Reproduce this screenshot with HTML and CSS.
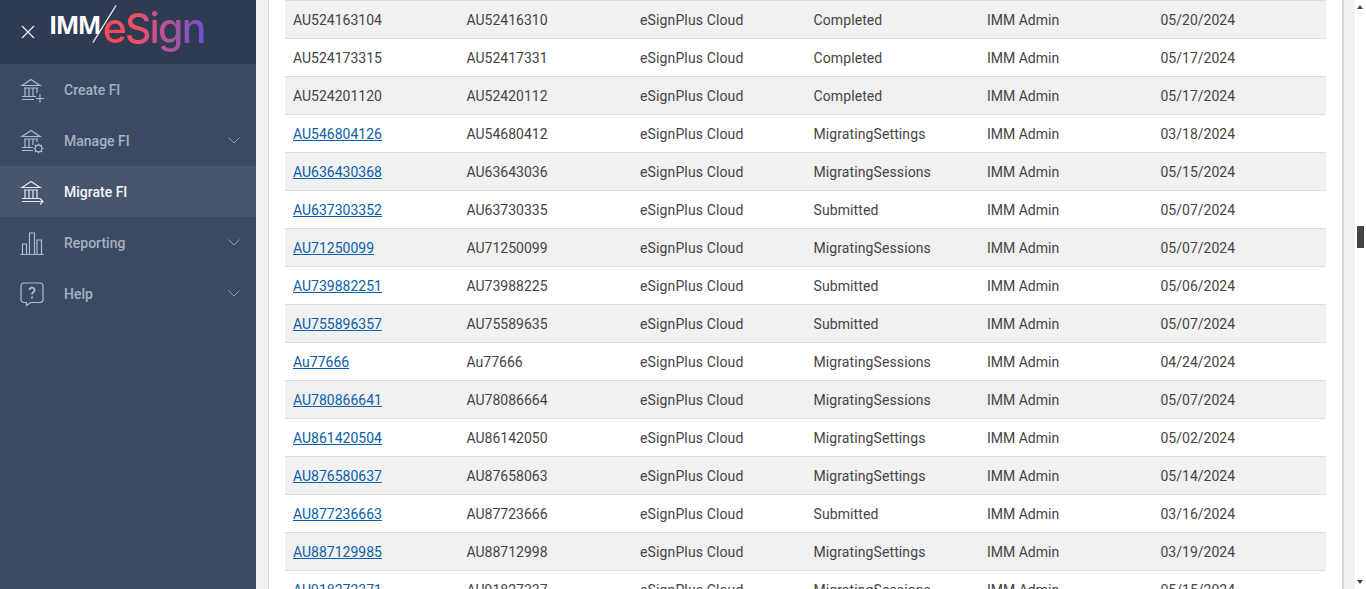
FILE: index.html
```html
<!DOCTYPE html>
<html lang="en">
<head>
    <meta charset="UTF-8">
    <meta name="viewport" content="width=device-width, initial-scale=1.0">
    <title>IMM eSign - Migrate FI</title>
    <link rel="stylesheet" href="styles.css">
</head>
<body>
    <aside class="sidebar">
        <div class="brand">
            <svg class="close-icon" viewBox="0 0 14 14"><path d="M1 1l12 12M13 1L1 13"/></svg>
            <div class="logo">
                <span class="logo-imm">IMM</span>
                <svg class="logo-slash" viewBox="0 0 25 38"><path d="M24 .5L1 37.5"/></svg>
                <span class="logo-esign">eSign</span>
            </div>
        </div>
        <nav class="menu">
            <a class="menu-item">
                <svg class="menu-icon" viewBox="0 0 24 26">
                    <path d="M2 8.5L11 2.5l9 6zM2.500 8.500h17M4 11h14M5 11v8M9 11v8M13 11v8M17 11v5M2 19.500h14M2 22.500h12M20 17.500v8M16 21.500h8"/>
                </svg>
                <span class="menu-label">Create FI</span>
            </a>
            <a class="menu-item">
                <svg class="menu-icon" viewBox="0 0 24 26">
                    <path d="M2 8.500L11 2.500l9 6zM2.500 8.500h17M4 11h14M5 11v8M9 11v8M13 11v6M17 11v3M2 19.500h11M2 22.500h11"/>
                    <circle cx="18.5" cy="20.5" r="3.4"/>
                    <path d="M18.500 15.500v1.600M18.500 23.900v1.600M13.500 20.500h1.600M21.900 20.500h1.600M15 17l1.100 1.100M20.900 22.900L22 24M22 17l-1.100 1.100M16.100 22.900L15 24"/>
                </svg>
                <span class="menu-label">Manage FI</span>
                <svg class="chevron" viewBox="0 0 12 7"><path d="M.5.5L6 6l5.500-5.500"/></svg>
            </a>
            <a class="menu-item active">
                <svg class="menu-icon" viewBox="0 0 24 26">
                    <path d="M2 8.500L11 2.500l9 6zM2.500 8.500h17M4 11h14M5 11v8M9 11v8M13 11v8M17 11v8M2 19.500h18M2 22.500h21M20 19.500l3 3-3 3"/>
                </svg>
                <span class="menu-label">Migrate FI</span>
            </a>
            <a class="menu-item">
                <svg class="menu-icon" viewBox="0 0 24 26">
                    <path d="M.5 24.500h23M2.500 24V14h4v10M9.500 24V3h5v21M17 24V10h4.500v14"/>
                </svg>
                <span class="menu-label">Reporting</span>
                <svg class="chevron" viewBox="0 0 12 7"><path d="M.5.5L6 6l5.500-5.500"/></svg>
            </a>
            <a class="menu-item">
                <svg class="menu-icon" viewBox="0 0 24 24">
                    <path d="M4 1h16a3 3 0 0 1 3 3v13.500a3 3 0 0 1-3 3h-9l-4.500 3v-3H4a3 3 0 0 1-3-3V4a3 3 0 0 1 3-3z"/>
                    <path class="help-mark" d="M9.500 8a2.500 2.500 0 1 1 3.600 2.300c-.8.400-1.100 1-1.100 2.200M12 14.500v2"/>
                </svg>
                <span class="menu-label">Help</span>
                <svg class="chevron" viewBox="0 0 12 7"><path d="M.5.5L6 6l5.500-5.500"/></svg>
            </a>
        </nav>
    </aside>

    <main class="content">
        <div class="panel">
            <table class="grid">
                <tbody>
                    <tr><td>AU524163104</td><td>AU52416310</td><td>eSignPlus Cloud</td><td>Completed</td><td>IMM Admin</td><td>05/20/2024</td></tr>
                    <tr><td>AU524173315</td><td>AU52417331</td><td>eSignPlus Cloud</td><td>Completed</td><td>IMM Admin</td><td>05/17/2024</td></tr>
                    <tr><td>AU524201120</td><td>AU52420112</td><td>eSignPlus Cloud</td><td>Completed</td><td>IMM Admin</td><td>05/17/2024</td></tr>
                    <tr><td><a href="#">AU546804126</a></td><td>AU54680412</td><td>eSignPlus Cloud</td><td>MigratingSettings</td><td>IMM Admin</td><td>03/18/2024</td></tr>
                    <tr><td><a href="#">AU636430368</a></td><td>AU63643036</td><td>eSignPlus Cloud</td><td>MigratingSessions</td><td>IMM Admin</td><td>05/15/2024</td></tr>
                    <tr><td><a href="#">AU637303352</a></td><td>AU63730335</td><td>eSignPlus Cloud</td><td>Submitted</td><td>IMM Admin</td><td>05/07/2024</td></tr>
                    <tr><td><a href="#">AU71250099</a></td><td>AU71250099</td><td>eSignPlus Cloud</td><td>MigratingSessions</td><td>IMM Admin</td><td>05/07/2024</td></tr>
                    <tr><td><a href="#">AU739882251</a></td><td>AU73988225</td><td>eSignPlus Cloud</td><td>Submitted</td><td>IMM Admin</td><td>05/06/2024</td></tr>
                    <tr><td><a href="#">AU755896357</a></td><td>AU75589635</td><td>eSignPlus Cloud</td><td>Submitted</td><td>IMM Admin</td><td>05/07/2024</td></tr>
                    <tr><td><a href="#">Au77666</a></td><td>Au77666</td><td>eSignPlus Cloud</td><td>MigratingSessions</td><td>IMM Admin</td><td>04/24/2024</td></tr>
                    <tr><td><a href="#">AU780866641</a></td><td>AU78086664</td><td>eSignPlus Cloud</td><td>MigratingSessions</td><td>IMM Admin</td><td>05/07/2024</td></tr>
                    <tr><td><a href="#">AU861420504</a></td><td>AU86142050</td><td>eSignPlus Cloud</td><td>MigratingSettings</td><td>IMM Admin</td><td>05/02/2024</td></tr>
                    <tr><td><a href="#">AU876580637</a></td><td>AU87658063</td><td>eSignPlus Cloud</td><td>MigratingSettings</td><td>IMM Admin</td><td>05/14/2024</td></tr>
                    <tr><td><a href="#">AU877236663</a></td><td>AU87723666</td><td>eSignPlus Cloud</td><td>Submitted</td><td>IMM Admin</td><td>03/16/2024</td></tr>
                    <tr><td><a href="#">AU887129985</a></td><td>AU88712998</td><td>eSignPlus Cloud</td><td>MigratingSettings</td><td>IMM Admin</td><td>03/19/2024</td></tr>
                    <tr><td><a href="#">AU918273371</a></td><td>AU91827337</td><td>eSignPlus Cloud</td><td>MigratingSessions</td><td>IMM Admin</td><td>05/15/2024</td></tr>
                </tbody>
            </table>
        </div>
    </main>

    <div class="scrollbar">
        <span class="arrow-up"></span>
        <div class="thumb"></div>
        <span class="arrow-down"></span>
    </div>
</body>
</html>
```

FILE: styles.css
```css
html, body {
    height: 100%;
}
body {
    display: flex;
    margin: 0;
    overflow: hidden;
    font-family: Roboto, "Liberation Sans", sans-serif;
    font-size: 14px;
    color: #444;
    background-color: #f1f1f1;
}

/* sidebar */
.sidebar {
    flex: 0 0 256px;
    background-color: #3b4a63;
}
.brand {
    display: flex;
    align-items: center;
    height: 64px;
    padding-left: 21px;
    box-sizing: border-box;
    background-color: #2f3b53;
}
.close-icon {
    width: 14px;
    height: 14px;
    fill: none;
    stroke: #e8ebef;
    stroke-width: 1.2;
}
.logo {
    position: relative;
    display: flex;
    align-items: center;
    margin-left: 14px;
    margin-top: -8px;
}
.logo-imm {
    font-family: "Open Sans", Roboto, sans-serif;
    font-size: 25px;
    font-weight: 700;
    letter-spacing: -1.6px;
    color: #fff;
    margin-top: -8px;
}
.logo-slash {
    position: absolute;
    left: 43px;
    top: 4px;
    width: 25px;
    height: 38px;
    fill: none;
    stroke: #f2f2f2;
    stroke-width: 1.3;
}
.logo-esign {
    margin-left: 3px;
    margin-top: 5px;
    font-family: Inter, Roboto, sans-serif;
    font-size: 41px;
    font-weight: 500;
    line-height: 44px;
    padding-bottom: 6px;
    letter-spacing: -1.8px;
    background: linear-gradient(90deg, #ff4a50 0%, #e8506a 35%, #a853a5 70%, #6f52d6 100%);
    -webkit-background-clip: text;
    background-clip: text;
    color: transparent;
}
.menu-item {
    display: flex;
    align-items: center;
    height: 51px;
    padding: 0 16px 0 20px;
    font-weight: 500;
    color: #a5b1c0;
}
.menu-item.active {
    background-color: #47566d;
    color: #f2f4f6;
}
.menu-icon {
    flex: 0 0 24px;
    width: 24px;
    height: 26px;
    fill: none;
    stroke: #b0bbc9;
    stroke-width: 1.2;
}
.menu-item.active .menu-icon {
    stroke: #e3e7ec;
}
.help-mark {
    stroke-width: 1.7;
}
.menu-label {
    flex: 1;
    margin-left: 20px;
}
.chevron {
    width: 12px;
    height: 7px;
    fill: none;
    stroke: #8e9bad;
    stroke-width: 1;
}

/* table panel */
.content {
    flex: 1;
    min-width: 0;
    padding-left: 12px;
    overflow: hidden;
}
.panel {
    width: 1076px;
    height: 100%;
    box-sizing: border-box;
    padding: 0 16px;
    background-color: #fff;
    border-left: 1px solid #d6d6d6;
    border-right: 2px solid #d6d6d6;
}
.grid {
    width: 1041px;
    table-layout: fixed;
    border-collapse: collapse;
    border-top: 1px solid #dcdce4;
}
.grid td {
    height: 37px;
    padding: 0 8px;
    border-bottom: 1px solid #dcdce4;
}
.grid td:nth-child(3) {
    letter-spacing: 0.13px;
}
.grid td:nth-child(4) {
    letter-spacing: 0.1px;
}
.grid tr:nth-child(odd) {
    background-color: #f1f1f1;
}
.grid a {
    color: #0b5ea8;
}

/* scrollbar strip */
.scrollbar {
    position: relative;
    flex: 0 0 11px;
    background-color: #fff;
}
.thumb {
    position: absolute;
    left: 2px;
    top: 226px;
    width: 7px;
    height: 22px;
    background-color: #444;
}
.arrow-up, .arrow-down {
    position: absolute;
    left: 2px;
    width: 0;
    height: 0;
    border-left: 3.5px solid transparent;
    border-right: 3.5px solid transparent;
}
.arrow-up {
    top: 5px;
    border-bottom: 4px solid #444;
}
.arrow-down {
    top: 580px;
    border-top: 4px solid #444;
}
```
